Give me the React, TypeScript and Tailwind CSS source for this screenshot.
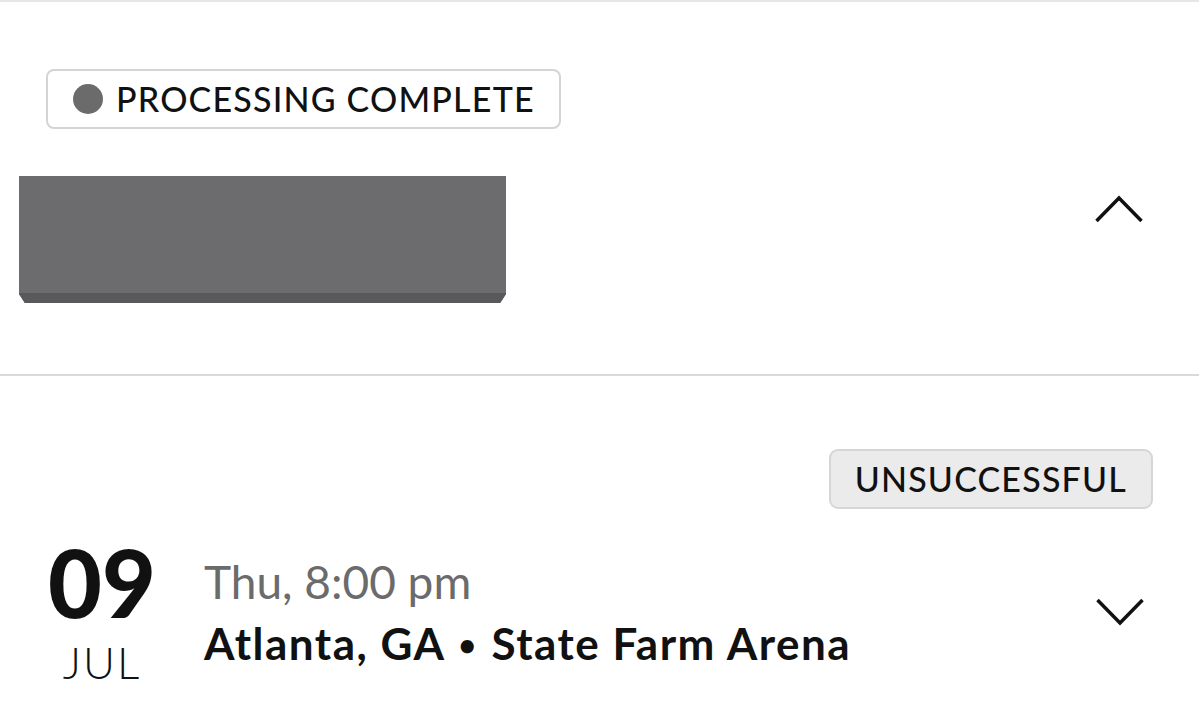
import React from "react";

function Chevron({ up }: { up?: boolean }) {
  return (
    <svg width="48" height="28" viewBox="0 0 48 28" fill="none" stroke="#111" strokeWidth={3.5}>
      {up ? <path d="M1.5 26 L24 3 L46.5 26" /> : <path d="M1.5 2 L24 25 L46.5 2" />}
    </svg>
  );
}

export default function App() {
  return (
    <div className="w-[1199px] h-[723px] bg-white overflow-hidden font-['Lato','Liberation_Sans',sans-serif] text-[#111]">
      <div className="h-[2px] bg-[#e6e6e6]" />

      {/* 処理完了カード */}
      <section className="pl-[19px] pr-[56px] pt-[67px] h-[372px]">
        <div className="ml-[27px] inline-flex items-center h-[60px] pl-[25px] pr-[24px] border-2 border-[#d4d4d4] rounded-[8px]">
          <span className="w-[30px] h-[30px] rounded-full bg-[#6b6b6b]" />
          <span className="ml-[13px] text-[34px] font-medium tracking-[1.2px] leading-none">PROCESSING COMPLETE</span>
        </div>
        <div className="mt-[47px] flex items-start justify-between">
          <div className="w-[487px] h-[127px] bg-[#6c6c6e] border-b-[10px] border-[#59595b] [clip-path:polygon(0_0,100%_0,100%_93%,98.8%_100%,1.2%_100%,0_93%)]" />
          <div className="mt-[19px]">
            <Chevron up />
          </div>
        </div>
      </section>

      <div className="h-[2px] bg-[#d9d9d9]" />

      {/* イベント行 */}
      <section className="pl-[46px] pr-[46px] pt-[73px]">
        <div className="flex justify-end">
          <div className="h-[60px] px-[24px] flex items-center bg-[#ebebeb] border-2 border-[#d6d6d6] rounded-[9px] text-[34px] font-medium tracking-[1.2px] leading-none">
            UNSUCCESSFUL
          </div>
        </div>
        <div className="mt-[27px] flex items-start">
          <div className="w-[112px] flex flex-col items-center">
            <div className="text-[93px] font-black leading-none">09</div>
            <div className="mt-[11px] text-[44px] font-light leading-none tracking-[2px]">JUL</div>
          </div>
          <div className="ml-[46px] pt-[18px] flex-1">
            <div className="text-[46px] text-[#6b6b6b] leading-[1.2]">Thu, 8:00 pm</div>
            <div className="mt-[8px] text-[44px] font-bold leading-[1.2] tracking-[1.5px]">
              Atlanta, GA <span className="text-[30px] align-[4px] mx-[2px]">•</span> State Farm Arena
            </div>
          </div>
          <div className="mt-[62px] mr-[9px]">
            <Chevron />
          </div>
        </div>
      </section>
    </div>
  );
}
